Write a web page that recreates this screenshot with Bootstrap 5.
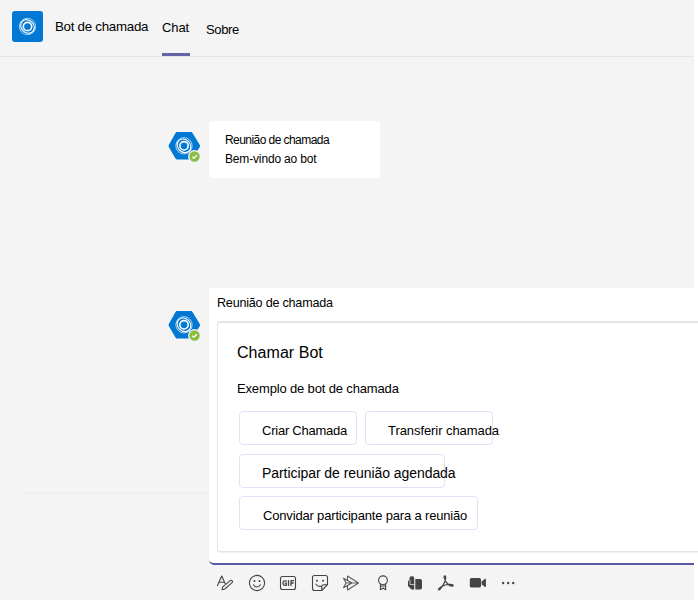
<!DOCTYPE html>
<html lang="pt">
<head>
<meta charset="utf-8">
<meta name="viewport" content="width=device-width, initial-scale=1">
<title>Bot de chamada</title>
<link href="https://cdn.jsdelivr.net/npm/bootstrap@5.3.0/dist/css/bootstrap.min.css" rel="stylesheet">
<style>
body{font-family:"Liberation Sans",Arial,sans-serif;font-size:13px;line-height:16px;color:#000;background:#fff;overflow:hidden}
.app{width:694px;height:600px;background:#f4f4f4}
.topbar{height:57px;border-bottom:1px solid #e6e6e6;padding-left:12px}
.app-logo{width:31px;height:31px;margin-top:11px}
.app-name{font-size:13.33px;letter-spacing:-.28px;margin:19px 0 0 12px;width:94px}
.tab-link{color:#000;height:56px;padding:20px 0 0;margin-left:13px;width:28px;letter-spacing:-.1px}
.tab-link.current{border-bottom:3px solid #6264a7}
.tab-link.about{letter-spacing:-.35px;padding-top:22px;margin-left:16px;width:40px}
.avatar{width:33px;height:33px}
.msg{padding-left:168px}
.first{padding-top:64px;height:231px}
.first .avatar{margin-top:9px}
.bubble{width:171px;height:57px;margin-left:8px;padding:10px 16px;border-radius:4px;font-size:12px;line-height:19px}
.t1{letter-spacing:-.56px}
.t2{letter-spacing:-.16px}
.second{height:277px}
.side{width:209px;padding-left:24px}
.side .avatar{margin:21px 0 0 144px}
.side-rule{border-top:2px solid #eee;margin-top:150px}
.panel{width:489px;height:277px;padding:7px 0 0 8px;margin-right:-4px}
.panel-title{font-size:12.6px;letter-spacing:-.22px;height:26px}
.sheet{height:231px;border:2px solid #e5e5e5;border-right:0;border-left-width:1.5px;border-bottom-width:1px;border-radius:3px 0 0 3px;padding:20px 0 0 19px;box-shadow:0 1px 1px #f0f0f0}
.sheet h1{font-size:16px;line-height:20px;letter-spacing:.05px;margin:0 0 18px}
.sheet p{letter-spacing:-.15px;margin:0 0 14px}
.choices{padding-left:2px;gap:8.6px}
.choice{height:34px;border:1px solid #e2e2f6;border-radius:4px;background:transparent;color:#000;font-size:13px;line-height:16px;padding:5px 0 0 22px;text-align:left;white-space:nowrap}
.c1{width:118px;letter-spacing:-.24px}
.c2{width:128px;letter-spacing:-.07px}
.c3{width:206px;font-size:14px;letter-spacing:-.06px;padding-top:4px}
.c4{width:239px;letter-spacing:-.17px;padding-left:23px}
.accent{position:absolute;left:0;right:4px;bottom:0;height:8px;border-bottom:2px solid #5558a4;border-radius:0 0 0 5px}
.tools{padding:8.500px 0 0 216px;gap:13.600px;color:#444}
.tools svg{width:18px;height:18px;fill:none;stroke:currentColor;stroke-width:1.1;stroke-linecap:round;stroke-linejoin:round}
</style>
</head>
<body>
<svg class="d-none">
  <symbol id="rings" viewBox="0 0 20 20">
    <g fill="none" stroke="#fff"><circle cx="10" cy="10" r="8.600" stroke-width=".9" opacity=".8"/><ellipse cx="10" cy="10" rx="7.700" ry="6.600" transform="rotate(45 10 10)" stroke-width="1.200"/><circle cx="10" cy="10" r="4.400" stroke-width="1.700"/></g>
  </symbol>
  <symbol id="bot" viewBox="0 0 33 33">
    <path d="M9 2h14q1 0 1.500 1l7.300 12q.5 1 0 2l-7.300 11.500q-.5 1-1.500 1H9q-1 0-1.500-1L.8 17q-.5-1 0-2L7.500 3Q8 2 9 2z" fill="#0078d4"/>
    <use href="#rings" x="6.500" y="6.300" width="19" height="19"/>
    <circle cx="26.500" cy="26.500" r="6.500" fill="#f4f4f4"/><circle cx="26.500" cy="26.500" r="5.200" fill="#8bbd45"/>
    <path d="M24.300 26.700l1.600 1.500 2.900-3" fill="none" stroke="#fff" stroke-width="1.300"/>
  </symbol>
</svg>
<div class="app d-flex flex-column">
  <header class="topbar d-flex flex-shrink-0">
    <svg class="app-logo" viewBox="0 0 31 31"><rect width="31" height="31" rx="3" fill="#0078d4"/><use href="#rings" x="6" y="6" width="19" height="19"/></svg>
    <div class="app-name text-nowrap">Bot de chamada</div>
    <nav class="d-flex">
      <a class="tab-link current text-decoration-none" href="#">Chat</a>
      <a class="tab-link about text-decoration-none" href="#">Sobre</a>
    </nav>
  </header>
  <main>
    <div class="msg first d-flex align-items-start">
      <svg class="avatar"><use href="#bot"/></svg>
      <div class="bubble bg-white text-nowrap"><div class="t1">Reunião de chamada</div><div class="t2">Bem-vindo ao bot</div></div>
    </div>
    <div class="second d-flex">
      <div class="side flex-shrink-0">
        <svg class="avatar d-block"><use href="#bot"/></svg>
        <div class="side-rule"></div>
      </div>
      <section class="panel bg-white flex-shrink-0 position-relative">
        <div class="panel-title">Reunião de chamada</div>
        <div class="sheet">
          <h1>Chamar Bot</h1>
          <p>Exemplo de bot de chamada</p>
          <div class="choices d-flex flex-column">
            <div class="d-flex gap-2"><button class="choice c1">Criar Chamada</button><button class="choice c2">Transferir chamada</button></div>
            <button class="choice c3">Participar de reunião agendada</button>
            <button class="choice c4">Convidar participante para a reunião</button>
          </div>
        </div>
        <div class="accent"></div>
      </section>
    </div>
    <div class="tools d-flex">
      <svg viewBox="0 0 18 18"><path d="M1.500 11.500L5.700 2l3.400 7.500M3 8.300h5.400M6 15.700l.7-2.800 7.600-6.300q1.200-.7 2 .2.600.9-.2 1.900L8.800 15z"/></svg>
      <svg viewBox="0 0 18 18"><circle cx="9" cy="9" r="7.600"/><path d="M5.500 10.800q1.200 2.200 3.500 2.200t3.500-2.200"/><g fill="currentColor" stroke="none"><circle cx="6.500" cy="7" r="1"/><circle cx="11.500" cy="7" r="1"/></g></svg>
      <svg viewBox="0 0 18 18"><rect x="1.500" y="2.500" width="15" height="13" rx="2"/><path stroke-width="1.300" d="M7.300 7.200Q4 6 4 9t3.300 2.300V9.200H6.200M9.500 6.700v4.700M12 11.400V6.700h2.500M12 9h2.200"/></svg>
      <svg viewBox="0 0 18 18"><path d="M3.500 1.500h11q2 0 2 2v7.200l-5.700 5.800H3.500q-2 0-2-2v-11q0-2 2-2zM16.500 10.700h-3.700q-2 0-2 2v3.800M5 10.200q1.800 2.800 5 2"/><g fill="currentColor" stroke="none"><circle cx="6" cy="6.700" r="1"/><circle cx="12" cy="6.700" r="1"/></g></svg>
      <svg viewBox="0 0 18 18" stroke-width="1" opacity=".85"><path d="M5.500 2l11 7-11 7v-4.700M5.500 2v4.700M1.500 4.300L10 9l-8.500 4.700L4 9zM4 9h12"/></svg>
      <svg viewBox="0 0 18 18"><circle cx="9" cy="6.300" r="4.400"/><path d="M6.400 9.900v5.800L9 14l2.600 1.700V9.900M6.400 12h5.200"/></svg>
      <svg viewBox="0 0 18 18"><g fill="currentColor" stroke="none"><path d="M2 7.500q0-1.300 1.500-1.300V4q0-1.800 1.800-1.800h1.300q1.600 0 1.600 1.800v11.500H5.500L2 12zM9.300 5h5q1.700 0 1.700 1.700v7q0 1.800-1.700 1.800h-5z"/></g><path d="M4 6.500v4h4" style="stroke:#f4f4f4;stroke-width:.7"/></svg>
      <svg viewBox="0 0 18 18"><path d="M8 1.800q-1.200 0-.8 1.700.9 3.800 3.300 6.300 2.500 2.500 4.800 2.300 1.200-.2.700-1.100-.5-.7-3.500-.6-4.500.1-8.300 2.300-2.700 1.500-2.700 2.600.2 1 1.400.1Q5 13.400 7.300 8.700 9.700 3 8 1.800z" stroke-width="1.300"/></svg>
      <svg viewBox="0 0 18 18"><path fill="currentColor" stroke="none" d="M2.500 4h7.800q1.700 0 1.700 1.600v6.400q0 1.600-1.700 1.600H2.500q-1.700 0-1.700-1.600V5.600Q.8 4 2.500 4zM12.600 7.400l3.500-2.600q.8-.4.800.5v7.200q0 .9-.8.500l-3.500-2.600z"/></svg>
      <svg viewBox="0 0 18 18"><g fill="currentColor" stroke="none"><circle cx="3.200" cy="9" r="1.200"/><circle cx="8.200" cy="9" r="1.200"/><circle cx="13.200" cy="9" r="1.200"/></g></svg>
    </div>
  </main>
</div>
<script src="https://cdn.jsdelivr.net/npm/bootstrap@5.3.0/dist/js/bootstrap.bundle.min.js"></script>
</body>
</html>
